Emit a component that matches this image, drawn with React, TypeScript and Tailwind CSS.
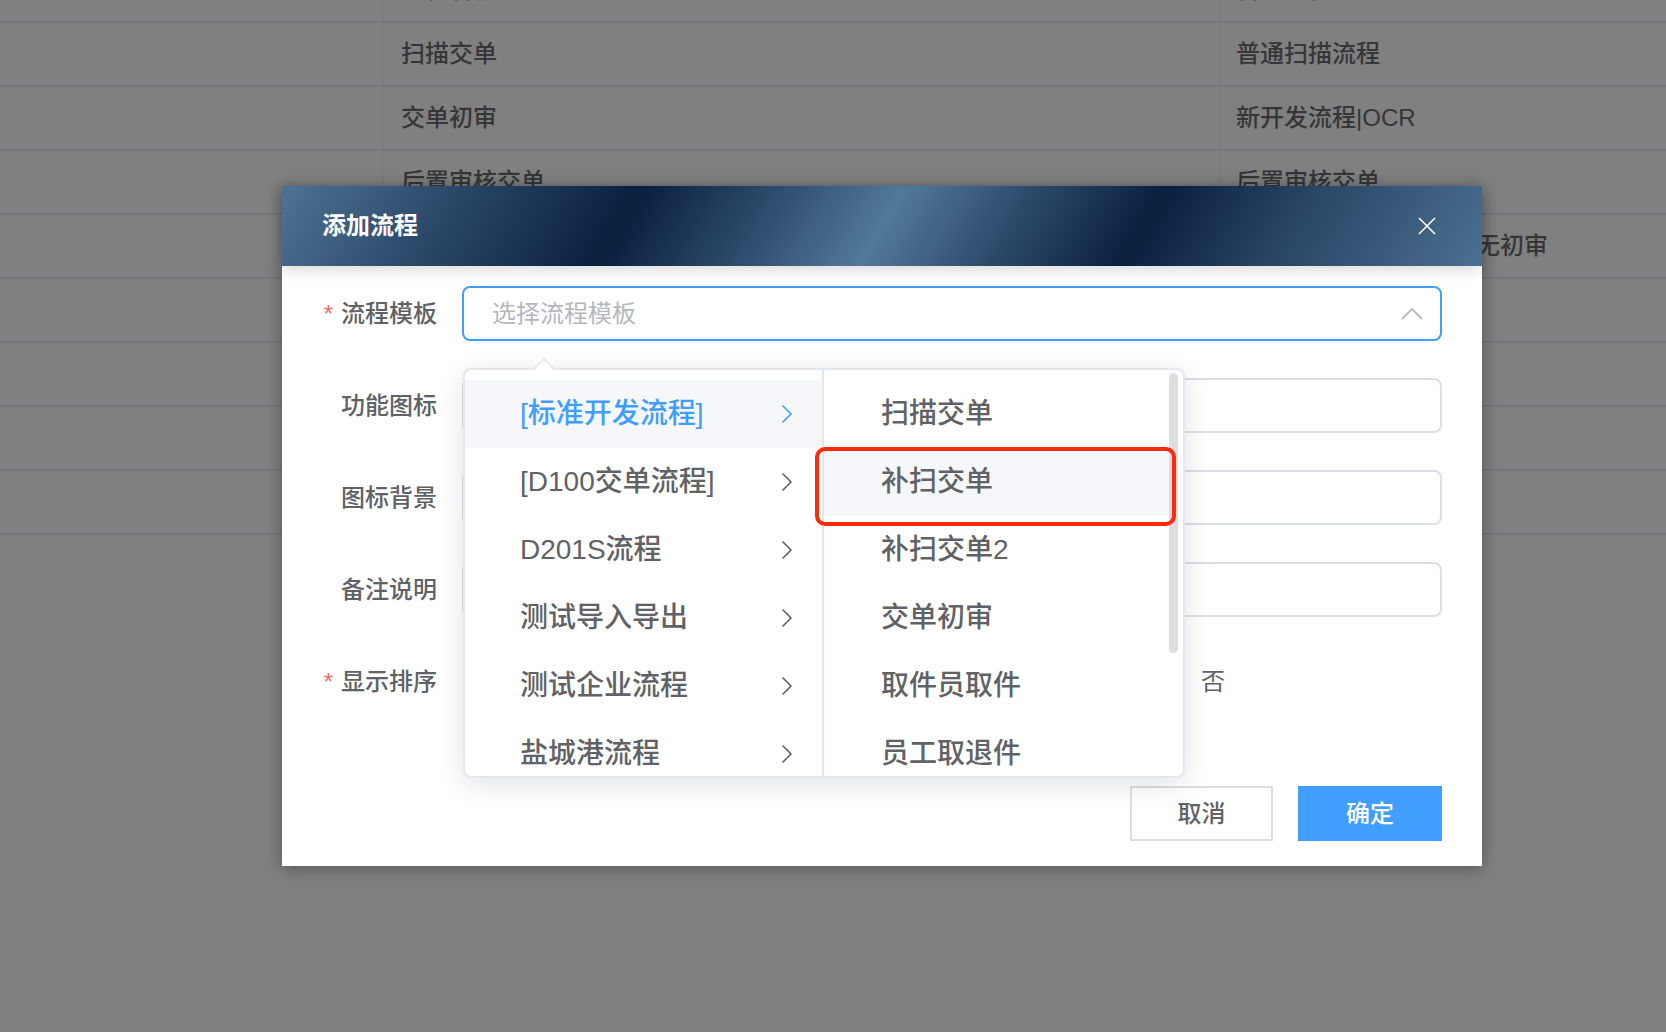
import React from 'react'

const tableRows = [
  ['流程名称', '普通流程'],
  ['扫描交单', '普通扫描流程'],
  ['交单初审', '新开发流程|OCR'],
  ['后置审核交单', '后置审核交单'],
  ['交单复审', '标准开发流程扫描交单无初审'],
  ['', ''],
  ['', ''],
  ['', ''],
  ['', ''],
]

const templates = ['[标准开发流程]', '[D100交单流程]', 'D201S流程', '测试导入导出', '测试企业流程', '盐城港流程']
const steps = ['扫描交单', '补扫交单', '补扫交单2', '交单初审', '取件员取件', '员工取退件']

function ChevronRight({ color }: { color: string }) {
  return (
    <svg width="12" height="20" viewBox="0 0 12 20" fill="none">
      <path d="M2 2l8 8-8 8" stroke={color} strokeWidth="1.7" strokeLinecap="round" strokeLinejoin="round" />
    </svg>
  )
}

interface FormRowProps {
  label: string
  required?: boolean
  children?: React.ReactNode
}

function FormRow({ label, required, children }: FormRowProps) {
  return (
    <div className="flex items-center h-[55px] mb-[37px]">
      <div className="w-[155px] flex justify-end items-center text-[24px] font-medium text-[#606266]">
        {required && <span className="text-[#f56c6c] mr-[8px]">*</span>}
        {label}
      </div>
      <div className="ml-[25px] w-[980px] h-full">{children}</div>
    </div>
  )
}

function PlainInput() {
  return <div className="h-full w-full border-2 border-[#dcdfe6] rounded-[8px] bg-white" />
}

export default function App() {
  return (
    <div className="relative w-[1666px] h-[1032px] overflow-hidden bg-[#808080] font-['Liberation_Sans','Noto_Sans_CJK_SC',sans-serif]">
      {/* background table under the mask */}
      <div className="mt-[-41px]">
        {tableRows.map((row, i) => (
          <div key={i} className="grid grid-cols-[382px_837px_1fr] h-[64px] border-b-2 border-[#76777c]">
            <div />
            <div className="border-l border-[#77787d] pl-[18px] flex items-center text-[24px] font-medium text-[#363638] whitespace-nowrap">
              {row[0]}
            </div>
            <div className="border-l border-[#77787d] pl-[16px] flex items-center text-[24px] font-medium text-[#363638] whitespace-nowrap">
              {row[1]}
            </div>
          </div>
        ))}
      </div>

      {/* dialog */}
      <div className="absolute left-[282px] top-[186px] w-[1200px] h-[680px] bg-white shadow-[0_2px_16px_rgba(0,0,0,0.35)]">
        <div className="relative z-10 h-[80px] flex items-center justify-between pl-[40px] pr-[46px] bg-[linear-gradient(120deg,#4d7394_0%,#2b4869_14%,#0b1f3f_29%,#2e4c6d_40%,#52799a_50%,#2e4b6c_60%,#0b1f3f_71%,#2a4566_83%,#4b7091_100%)] shadow-[0_4px_14px_rgba(0,0,0,0.15)]">
          <span className="text-[24px] font-bold text-white">添加流程</span>
          <svg width="18" height="18" viewBox="0 0 18 18" fill="none">
            <path d="M1 1L17 17M17 1L1 17" stroke="#ffffff" strokeWidth="1.6" />
          </svg>
        </div>

        <div className="pt-[20px] pr-[40px]">
          <FormRow label="流程模板" required>
            <div className="h-full w-full border-2 border-[#409eff] rounded-[8px] bg-white flex items-center justify-between pl-[28px] pr-[16px]">
              <span className="text-[24px] text-[#b4b7bd]">选择流程模板</span>
              <svg width="24" height="14" viewBox="0 0 24 14" fill="none">
                <path d="M2 12L12 2L22 12" stroke="#b4b7bd" strokeWidth="1.8" />
              </svg>
            </div>
          </FormRow>
          <FormRow label="功能图标">
            <PlainInput />
          </FormRow>
          <FormRow label="图标背景">
            <PlainInput />
          </FormRow>
          <FormRow label="备注说明">
            <PlainInput />
          </FormRow>
          <FormRow label="显示排序" required>
            <div className="h-full flex items-center text-[24px] text-[#606266]">
              <span className="w-[739px]">是</span>
              <span>否</span>
            </div>
          </FormRow>

          <div className="mt-[77px] flex justify-end gap-[25px]">
            <button className="w-[143px] h-[55px] border-2 border-[#dcdfe6] bg-white text-[24px] font-medium text-[#606266]">
              取消
            </button>
            <button className="w-[144px] h-[55px] bg-[#409eff] text-[24px] font-medium text-white">
              确定
            </button>
          </div>
        </div>

        {/* cascader dropdown */}
        <div className="absolute left-[181px] top-[182px] w-[722px] h-[410px] z-20 bg-white border-2 border-[#e4e7ed] rounded-[8px] shadow-[0_6px_28px_rgba(0,0,0,0.12)]">
          <div className="absolute left-[71px] top-[-9px] w-[16px] h-[16px] rotate-45 bg-white border-l-2 border-t-2 border-[#e4e7ed]" />
          <div className="flex h-full overflow-hidden rounded-[8px]">
            <div className="w-[359px] border-r-2 border-[#e4e7ed] pt-[10px]">
              {templates.map((t, i) => (
                <div
                  key={t}
                  className={
                    i === 0
                      ? 'h-[68px] flex items-center justify-between pl-[55px] pr-[29px] bg-[#f5f7fa] text-[28px] font-medium text-[#409eff] whitespace-nowrap'
                      : 'h-[68px] flex items-center justify-between pl-[55px] pr-[29px] text-[28px] font-medium text-[#606266] whitespace-nowrap'
                  }
                >
                  <span>{t}</span>
                  <ChevronRight color={i === 0 ? '#409eff' : '#606266'} />
                </div>
              ))}
            </div>
            <div className="relative flex-1 pt-[10px]">
              {steps.map((s, i) => (
                <div
                  key={s}
                  className={
                    i === 1
                      ? 'h-[68px] mr-[14px] flex items-center pl-[57px] bg-[#f5f7fa] text-[28px] font-medium text-[#606266] whitespace-nowrap'
                      : 'h-[68px] mr-[14px] flex items-center pl-[57px] text-[28px] font-medium text-[#606266] whitespace-nowrap'
                  }
                >
                  {s}
                </div>
              ))}
              <div className="absolute right-[5px] top-[3px] w-[9px] h-[280px] rounded-full bg-[#dddee1]" />
            </div>
          </div>
          {/* highlight annotation */}
          <div className="absolute left-[350px] top-[77px] w-[361px] h-[79px] border-4 border-[#fe2a0a] rounded-[10px]" />
        </div>
      </div>
    </div>
  )
}
